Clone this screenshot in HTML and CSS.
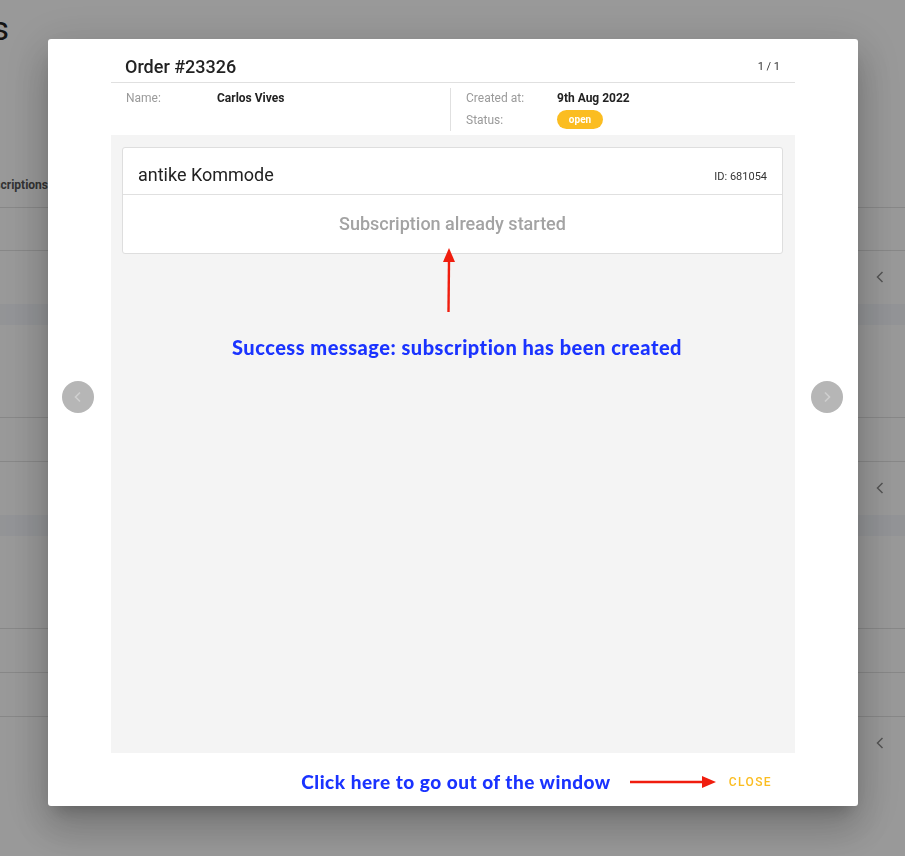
FILE: index.html
```html
<!DOCTYPE html>
<html lang="en">
<head>
  <meta charset="UTF-8">
  <meta name="viewport" content="width=device-width, initial-scale=1.0">
  <title>Order #23326</title>
  <link rel="stylesheet" href="styles.css">
</head>
<body>
  <div class="page">
    <div class="page-title"><span>Subscriptions</span></div>
    <div class="table">
      <div class="row head"><span class="cell-title">Subscriptions</span></div>
      <div class="row r1"></div>
      <div class="row r2">
        <svg class="chev" width="8" height="12" viewBox="0 0 8 12"><path d="M6.5 1 1.5 6 6.5 11" fill="none" stroke="#8c8c8c" stroke-width="1.5"/></svg>
        <div class="band"></div>
      </div>
      <div class="row r1"></div>
      <div class="row r2">
        <svg class="chev" width="8" height="12" viewBox="0 0 8 12"><path d="M6.5 1 1.5 6 6.5 11" fill="none" stroke="#8c8c8c" stroke-width="1.5"/></svg>
        <div class="band"></div>
      </div>
      <div class="row r1"></div>
      <div class="row r1"></div>
      <div class="row r3">
        <svg class="chev" width="8" height="12" viewBox="0 0 8 12"><path d="M6.5 1 1.5 6 6.5 11" fill="none" stroke="#8c8c8c" stroke-width="1.5"/></svg>
      </div>
    </div>
  </div>

  <div class="overlay"></div>

  <div class="modal">
    <button class="nav prev"><svg width="10" height="12" viewBox="0 0 10 12"><path d="M7 1.5 2.5 6 7 10.5" fill="none" stroke="#cfcfcf" stroke-width="1.6"/></svg></button>
    <button class="nav next"><svg width="10" height="12" viewBox="0 0 10 12"><path d="M3 1.5 7.5 6 3 10.5" fill="none" stroke="#cfcfcf" stroke-width="1.6"/></svg></button>

    <div class="modal-inner">
      <div class="modal-head">
        <h2>Order #23326</h2>
        <span class="pager">1 / 1</span>
      </div>

      <div class="info">
        <div class="info-col">
          <div class="info-row"><span class="label">Name:</span><span class="value">Carlos Vives</span></div>
        </div>
        <div class="info-col split">
          <div class="info-row"><span class="label">Created at:</span><span class="value">9th Aug 2022</span></div>
          <div class="info-row"><span class="label">Status:</span><span class="badge">open</span></div>
        </div>
      </div>

      <div class="content">
        <div class="card">
          <div class="card-head">
            <h3>antike Kommode</h3>
            <span class="card-id">ID: 681054</span>
          </div>
          <div class="card-body">Subscription already started</div>
        </div>

        <svg class="arrow-up" width="16" height="66" viewBox="0 0 16 66">
          <path d="M8 12 7.5 64" stroke="#f01d0e" stroke-width="2.4" fill="none"/>
          <path d="M8 0 14 14 2 14Z" fill="#f01d0e"/>
        </svg>
        <p class="note">Success message: subscription has been created</p>
      </div>

      <div class="modal-foot">
        <span class="note foot-note">Click here to go out of the window</span>
        <svg class="arrow-right" width="86" height="16" viewBox="0 0 86 16">
          <path d="M0 8H74" stroke="#f01d0e" stroke-width="2.4"/>
          <path d="M86 8 72 2 72 14Z" fill="#f01d0e"/>
        </svg>
        <button class="close">Close</button>
      </div>
    </div>
  </div>
</body>
</html>
```

FILE: styles.css
```css
body {
  margin: 0;
  font-family: Roboto, "Noto Sans", Arial, sans-serif;
  background: #fff;
  overflow: hidden;
  height: 856px;
}

.page {
  height: 856px;
  overflow: hidden;
}
.page-title {
  display: flex;
  justify-content: flex-end;
  width: 9px;
  height: 60px;
  font-size: 34px;
  color: #222;
  padding-top: 8px;
  box-sizing: border-box;
  line-height: 40px;
  white-space: nowrap;
}
.table {
  margin-top: 103px;
}
.row {
  position: relative;
  border-bottom: 1px solid #e2e2e2;
  box-sizing: border-box;
}
.row.head {
  height: 44px;
  display: flex;
  justify-content: flex-end;
  align-items: center;
  width: 48px;
  border-bottom: none;
  white-space: nowrap;
}
.table .row.head + .row {
  border-top: 1px solid #e2e2e2;
}
.cell-title {
  font-size: 12px;
  font-weight: 700;
  color: #555;
}
.r1 {
  height: 44px;
}
.r2 {
  height: 167px;
  padding-top: 53px;
}
.r3 {
  height: 140px;
  border-bottom: none;
}
.band {
  height: 21px;
  background: #f5f7fb;
}
.chev {
  position: absolute;
  right: 21px;
  top: 20px;
}

.overlay {
  position: fixed;
  inset: 0;
  background: rgba(0, 0, 0, 0.4);
}

.modal {
  position: fixed;
  left: 48px;
  top: 39px;
  width: 810px;
  height: 767px;
  background: #fff;
  border-radius: 3px;
  box-shadow: 0 11px 15px -7px rgba(0, 0, 0, 0.2), 0 24px 38px 3px rgba(0, 0, 0, 0.14), 0 9px 46px 8px rgba(0, 0, 0, 0.12);
  box-sizing: border-box;
  padding: 0 63px;
}
.modal-inner {
  display: flex;
  flex-direction: column;
  height: 100%;
}
.nav {
  position: absolute;
  top: 342px;
  width: 32px;
  height: 32px;
  border-radius: 50%;
  border: none;
  background: #b6b6b6;
  display: flex;
  align-items: center;
  justify-content: center;
  padding: 0;
}
.nav.prev {
  left: 14px;
}
.nav.next {
  right: 15px;
}

.modal-head {
  height: 44px;
  display: flex;
  align-items: flex-end;
  justify-content: space-between;
  padding: 0 15px 3px 14px;
  border-bottom: 1px solid #e0e0e0;
  box-sizing: border-box;
  flex-shrink: 0;
}
.modal-head h2 {
  margin: 0;
  font-size: 18px;
  font-weight: 500;
  line-height: 24px;
  color: #222;
}
.pager {
  font-size: 11px;
  color: #333;
  line-height: 24px;
}

.info {
  display: grid;
  grid-template-columns: 339px 1fr;
  margin-top: 5px;
  flex-shrink: 0;
}
.info-col {
  padding-left: 15px;
}
.info-col.split {
  border-left: 1px solid #e0e0e0;
  padding-bottom: 1px;
}
.info-row {
  display: flex;
  align-items: center;
  height: 21px;
  font-size: 12px;
}
.info-row:first-child {
  padding-bottom: 1px;
  height: 20px;
}
.label {
  width: 91px;
  color: #9a9a9a;
}
.value {
  font-weight: 700;
  color: #222;
}
.badge {
  background: #fbbd21;
  color: #fff;
  font-size: 10px;
  font-weight: 700;
  border-radius: 10px;
  width: 46px;
  height: 19px;
  line-height: 19px;
  text-align: center;
}

.content {
  margin-top: 4px;
  flex: 1;
  background: #f4f4f4;
  padding: 12px 12px 12px 11px;
  display: flex;
  flex-direction: column;
  align-items: center;
}
.card {
  align-self: stretch;
  background: #fff;
  border: 1px solid #dedede;
  border-radius: 3px;
}
.card-head {
  display: flex;
  justify-content: space-between;
  align-items: center;
  padding: 16px 15px 8px 15px;
  border-bottom: 1px solid #e0e0e0;
}
.card-head h3 {
  margin: 0;
  font-size: 18px;
  font-weight: 400;
  line-height: 22px;
  color: #222;
}
.card-id {
  font-size: 11px;
  color: #333;
  padding-top: 3px;
}
.card-body {
  text-align: center;
  font-size: 18px;
  font-weight: 500;
  color: #a3a3a3;
  line-height: 22px;
  padding: 18px 0 18px;
}

.arrow-up {
  margin-top: -6px;
  margin-left: -8px;
  display: block;
}
.note {
  font-family: Lato, "Open Sans", sans-serif;
  font-weight: 900;
  font-size: 20px;
  letter-spacing: 0.5px;
  color: #1a33ff;
  margin: 21px 0 0 9px;
  line-height: 24px;
}

.modal-foot {
  height: 53px;
  display: flex;
  align-items: center;
  justify-content: flex-end;
  flex-shrink: 0;
  padding: 4px 23px 0 0;
  box-sizing: border-box;
}
.note.foot-note {
  margin: 0;
  font-size: 19px;
}
.arrow-right {
  margin-left: 19px;
  display: block;
}
.close {
  margin-left: 13px;
  border: none;
  background: none;
  padding: 0;
  font-family: Roboto, sans-serif;
  font-size: 12px;
  font-weight: 500;
  letter-spacing: 1.4px;
  text-transform: uppercase;
  color: #fbbd21;
}
```
